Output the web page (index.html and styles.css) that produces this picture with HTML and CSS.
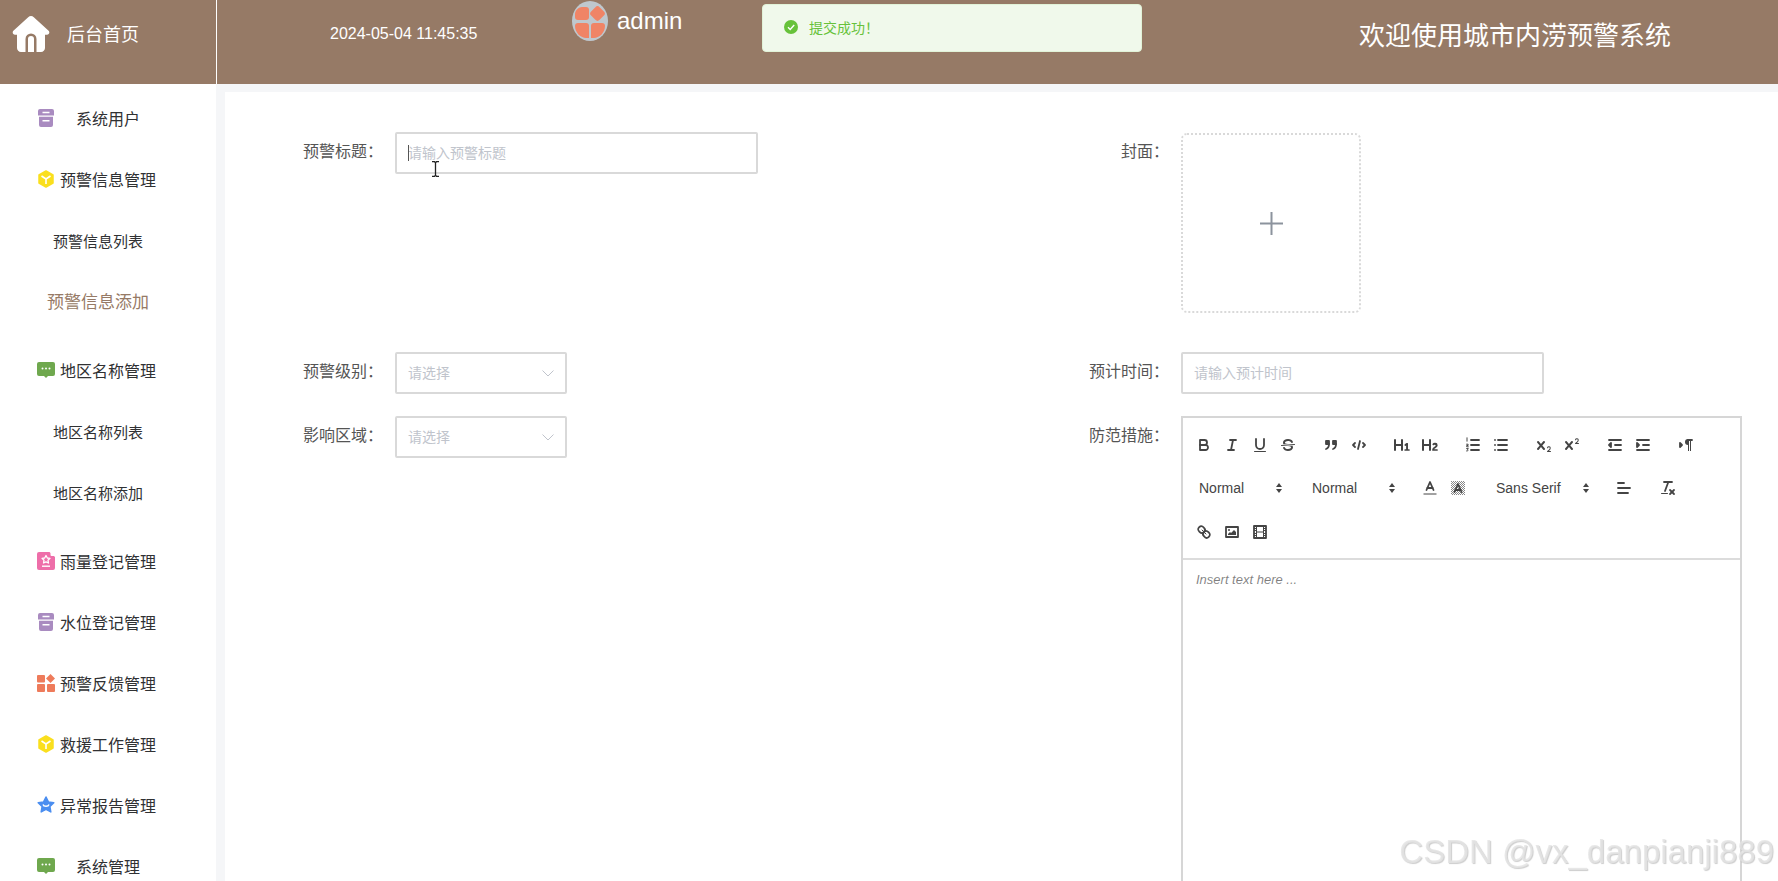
FILE: index.html
```html
<!DOCTYPE html>
<html lang="zh">
<head>
    <meta charset="UTF-8">
    <title>城市内涝预警系统</title>
    <link rel="stylesheet" href="styles.css">
</head>
<body>
    <svg class="defs" width="0" height="0">
        <symbol id="i-box" viewBox="0 0 18 18">
            <path fill="#a98bc0" d="M3 0h12a2 2 0 0 1 2 2v4.600H1V2a2 2 0 0 1 2-2zM2 7.800h14V16a2 2 0 0 1-2 2H4a2 2 0 0 1-2-2z"/>
            <path fill="#fff" d="M5.500 2.800h7v1.500h-7zM5.500 11h7v1.500h-7z"/>
        </symbol>
        <symbol id="i-cube" viewBox="0 0 18 18">
            <path fill="#fadf1e" stroke="#fadf1e" stroke-width="1.500" stroke-linejoin="round" d="M9 1l7 4v8l-7 4-7-4V5z"/>
            <path fill="none" stroke="#fff" stroke-width="1.600" d="M4.500 6L9 9l4.500-3M9 9v5"/>
        </symbol>
        <symbol id="i-chat" viewBox="0 0 18 16">
            <path fill="#6fa84e" d="M2 0h14a2 2 0 0 1 2 2v10a2 2 0 0 1-2 2h-5l-2 2-2-2H2a2 2 0 0 1-2-2V2a2 2 0 0 1 2-2z"/>
            <circle cx="5.500" cy="6.500" r="1" fill="#fff"/>
            <circle cx="9" cy="6.500" r="1" fill="#fff"/>
            <circle cx="12.500" cy="6.500" r="1" fill="#fff"/>
        </symbol>
    </svg>

    <header class="top">
        <div class="top-home">
            <svg class="home-icon" viewBox="0 0 38 36">
                <path fill="#fff" d="M19 0c1 0 2 .4 2.800 1.200l14.800 13.600c1.500 1.500.5 4-1.600 4H33v13.200c0 2.200-1.800 4-4 4H9c-2.200 0-4-1.800-4-4V18.800H3c-2.100 0-3.100-2.500-1.600-4L16.200 1.200C17 .4 18 0 19 0z"/>
                <path fill="#967a66" d="M13.500 36V23a5.500 5.500 0 0 1 11 0v13h-2.500V23a3 3 0 0 0-6 0v13z"/>
            </svg>
            <span class="home-text">后台首页</span>
        </div>
        <div class="time">2024-05-04 11:45:35</div>
        <div class="user">
            <svg class="avatar" viewBox="0 0 36 40">
                <ellipse cx="18" cy="20" rx="18" ry="20" fill="#bfc8ce"/>
                <path fill="#f08466" d="M10 6h4a3 3 0 0 1 3 3v7a3 3 0 0 1-3 3H6a3 3 0 0 1-3-3v-3c0-3 3-7 7-7z"/>
                <rect x="19.500" y="6.500" width="12" height="12" rx="3" transform="rotate(45 25.500 12.500)" fill="#f08466"/>
                <path fill="#f08466" d="M6 22h8a3 3 0 0 1 3 3v12h-3c-5 0-11-5-11-12a3 3 0 0 1 3-3z"/>
                <path fill="#f08466" d="M22 22h8a3 3 0 0 1 3 3c0 7-6 12-11 12h-3V25a3 3 0 0 1 3-3z"/>
            </svg>
            <span class="user-name">admin</span>
        </div>
        <h1 class="title">欢迎使用城市内涝预警系统</h1>
    </header>

    <div class="toast">
        <svg class="toast-icon" viewBox="0 0 14 14">
            <circle cx="7" cy="7" r="7" fill="#67c23a"/>
            <path fill="none" stroke="#fff" stroke-width="1.400" d="M4 7.200l2.200 2.200L10.200 5"/>
        </svg>
        <span>提交成功！</span>
    </div>

    <div class="main">
        <aside class="side">
            <ul class="menu">
                <li class="menu-item"><svg class="menu-icon"><use href="#i-box"/></svg><span class="menu-text wide">系统用户</span></li>
                <li class="menu-item"><svg class="menu-icon"><use href="#i-cube"/></svg><span class="menu-text">预警信息管理</span></li>
                <li class="sub">
                    <div class="sub-item">预警信息列表</div>
                    <div class="sub-item active">预警信息添加</div>
                </li>
                <li class="menu-item"><svg class="menu-icon"><use href="#i-chat"/></svg><span class="menu-text">地区名称管理</span></li>
                <li class="sub">
                    <div class="sub-item">地区名称列表</div>
                    <div class="sub-item">地区名称添加</div>
                </li>
                <li class="menu-item">
                    <svg class="menu-icon" viewBox="0 0 18 18">
                        <path fill="#ee6ea9" d="M2 0h10.500L18 5v11a2 2 0 0 1-2 2H2a2 2 0 0 1-2-2V2a2 2 0 0 1 2-2z"/>
                        <path fill="#fff" d="M13.500 0L18 4h-3.500a1 1 0 0 1-1-1z"/>
                        <path fill="none" stroke="#fff" stroke-width="1.300" stroke-linejoin="round" d="M9 3.500l1.300 2.500 2.700.4-2 1.900.5 2.700L9 9.800l-2.500 1.200.5-2.700-2-1.900 2.700-.4z"/>
                        <path fill="#fff" d="M5 13.500h8v1.400H5z"/>
                    </svg>
                    <span class="menu-text">雨量登记管理</span>
                </li>
                <li class="menu-item"><svg class="menu-icon"><use href="#i-box"/></svg><span class="menu-text">水位登记管理</span></li>
                <li class="menu-item">
                    <svg class="menu-icon" viewBox="0 0 18 18">
                        <rect x="0" y="1" width="8" height="7.500" rx="1" fill="#ee7b5b"/>
                        <path fill="#ee7b5b" d="M13.500 0l4.500 4.500-4.500 4.500L9 4.500z"/>
                        <rect x="0" y="10" width="8" height="8" rx="1" fill="#ee7b5b"/>
                        <rect x="10" y="10" width="8" height="8" rx="1" fill="#ee7b5b"/>
                    </svg>
                    <span class="menu-text">预警反馈管理</span>
                </li>
                <li class="menu-item"><svg class="menu-icon"><use href="#i-cube"/></svg><span class="menu-text">救援工作管理</span></li>
                <li class="menu-item">
                    <svg class="menu-icon" viewBox="0 0 18 18">
                        <path fill="#4b8ef0" stroke="#4b8ef0" stroke-width="1.500" stroke-linejoin="round" d="M9 1l2.400 4.900 5.400.8-3.900 3.800.9 5.400L9 13.400l-4.800 2.500.9-5.400L1.200 6.700l5.400-.8z"/>
                        <path fill="none" stroke="#fff" stroke-width="1.400" d="M6 8.500c.6 2.400 5.400 2.400 6 0"/>
                    </svg>
                    <span class="menu-text">异常报告管理</span>
                </li>
                <li class="menu-item"><svg class="menu-icon"><use href="#i-chat"/></svg><span class="menu-text wide">系统管理</span></li>
            </ul>
        </aside>

        <main class="content">
            <form class="form">
                <div class="form-item">
                    <label class="form-label">预警标题：</label>
                    <div class="input long focused"><span class="caret"></span>请输入预警标题</div>
                </div>
                <div class="form-item cover-row">
                    <label class="form-label">封面：</label>
                    <div class="upload">
                        <svg class="plus" viewBox="0 0 23 23"><path fill="none" stroke="#8c939d" stroke-width="2" d="M0 11.500h23M11.500 0v23"/></svg>
                    </div>
                </div>

                <div class="form-item">
                    <label class="form-label">预警级别：</label>
                    <div class="input short">请选择
                        <svg class="chevron" viewBox="0 0 12 7"><path fill="none" stroke="#c0c4cc" stroke-width="1" d="M.5.500L6 6l5.500-5.500"/></svg>
                    </div>
                </div>
                <div class="form-item">
                    <label class="form-label">预计时间：</label>
                    <div class="input long">请输入预计时间</div>
                </div>

                <div class="form-item">
                    <label class="form-label">影响区域：</label>
                    <div class="input short">请选择
                        <svg class="chevron" viewBox="0 0 12 7"><path fill="none" stroke="#c0c4cc" stroke-width="1" d="M.5.500L6 6l5.500-5.500"/></svg>
                    </div>
                </div>
                <div class="form-item">
                    <label class="form-label">防范措施：</label>
                    <div class="editor">
                        <div class="toolbar">
                            <div class="tool-row">
                                <div class="tool-group">
                                    <button class="tool" type="button"><svg viewBox="0 0 18 18"><path class="st" d="M5,4H9.500A2.500,2.500,0,0,1,12,6.500v0A2.500,2.500,0,0,1,9.500,9H5V4Z"/><path class="st" d="M5,9h5.500A2.500,2.500,0,0,1,13,11.500v0A2.500,2.500,0,0,1,10.500,14H5V9Z"/></svg></button>
                                    <button class="tool" type="button"><svg viewBox="0 0 18 18"><line class="st" x1="7" x2="13" y1="4" y2="4"/><line class="st" x1="5" x2="11" y1="14" y2="14"/><line class="st" x1="8" x2="10" y1="14" y2="4"/></svg></button>
                                    <button class="tool" type="button"><svg viewBox="0 0 18 18"><path class="st" d="M5,3V9a4.012,4.012,0,0,0,4,4H9a4.012,4.012,0,0,0,4-4V3"/><rect class="fl" height="1" rx=".5" ry=".5" width="12" x="3" y="15"/></svg></button>
                                    <button class="tool" type="button"><svg viewBox="0 0 18 18"><line class="st thin" x1="15.500" x2="2.500" y1="8.500" y2="9.500"/><path class="fl" d="M9.007,8C6.542,7.791,6,7.519,6,6.500,6,5.792,7.283,5,9,5c1.571,0,2.765.679,2.969,1.309a1,1,0,0,0,1.900-.617C13.356,4.106,11.354,3,9,3,6.200,3,4,4.538,4,6.500a3.200,3.200,0,0,0,.5,1.843Z"/><path class="fl" d="M8.984,10C11.457,10.208,12,10.479,12,11.500c0,.708-1.283,1.500-3,1.500-1.571,0-2.765-.679-2.969-1.309a1,1,0,1,0-1.900.617C4.644,13.894,6.646,15,9,15c2.800,0,5-1.538,5-3.500a3.200,3.200,0,0,0-.5-1.843Z"/></svg></button>
                                </div>
                                <div class="tool-group">
                                    <button class="tool" type="button"><svg viewBox="0 0 18 18"><rect class="fl st" height="3" width="3" x="4" y="5"/><rect class="fl st" height="3" width="3" x="11" y="5"/><path class="st" d="M7,8c0,4.031-3,5-3,5"/><path class="st" d="M14,8c0,4.031-3,5-3,5"/></svg></button>
                                    <button class="tool" type="button"><svg viewBox="0 0 18 18"><polyline class="st" points="5 7 3 9 5 11"/><polyline class="st" points="13 7 15 9 13 11"/><line class="st" x1="10" x2="8" y1="5" y2="13"/></svg></button>
                                </div>
                                <div class="tool-group">
                                    <button class="tool" type="button"><svg viewBox="0 0 18 18"><path class="fl" d="M10,4V14a1,1,0,0,1-2,0V10H3v4a1,1,0,0,1-2,0V4A1,1,0,0,1,3,4V8H8V4a1,1,0,0,1,2,0Zm6.068,9.209H14.990V7.599a.541.541,0,0,0-.605-.605h-.627a1.011,1.011,0,0,0-.748.297L11.645,8.566a.544.544,0,0,0-.022.858l.286.308a.539.539,0,0,0,.847.033l.099-.088a1.214,1.214,0,0,0,.242-.353h.022s-.011.309-.011.605V13.209H12.041a.541.541,0,0,0-.605.605v.44a.541.541,0,0,0,.605.605h4.027a.541.541,0,0,0,.605-.605v-.44A.541.541,0,0,0,16.068,13.209Z"/></svg></button>
                                    <button class="tool" type="button"><svg viewBox="0 0 18 18"><path class="fl" d="M16.740,13.814v.44a.541.541,0,0,1-.605.605H11.855a.584.584,0,0,1-.649-.605V14.013c0-2.905,3.399-3.422,3.399-4.555a.777.777,0,0,0-.847-.781,1.177,1.177,0,0,0-.836.385c-.275.264-.561.374-.858.132l-.429-.341c-.308-.242-.385-.518-.154-.814a2.972,2.972,0,0,1,2.454-1.177,2.454,2.454,0,0,1,2.684,2.409c0,2.453-3.179,2.927-3.278,3.938h2.794A.541.541,0,0,1,16.740,13.814ZM9,3A1,1,0,0,0,8,4V8H3V4A1,1,0,0,0,1,4V14a1,1,0,0,0,2,0V10H8v4a1,1,0,0,0,2,0V4A1,1,0,0,0,9,3Z"/></svg></button>
                                </div>
                                <div class="tool-group">
                                    <button class="tool" type="button"><svg viewBox="0 0 18 18"><line class="st" x1="7" x2="15" y1="4" y2="4"/><line class="st" x1="7" x2="15" y1="9" y2="9"/><line class="st" x1="7" x2="15" y1="14" y2="14"/><path class="st thin" d="M3 1.800v3.400M2.600 8.200h1.500v1.300H2.700v1.300h1.600M2.600 12.600h1.700l-.8 1.200c.8 0 .9 1.500-.9 1.200"/></svg></button>
                                    <button class="tool" type="button"><svg viewBox="0 0 18 18"><line class="st" x1="6" x2="15" y1="4" y2="4"/><line class="st" x1="6" x2="15" y1="9" y2="9"/><line class="st" x1="6" x2="15" y1="14" y2="14"/><line class="st" x1="3" x2="3" y1="4" y2="4"/><line class="st" x1="3" x2="3" y1="9" y2="9"/><line class="st" x1="3" x2="3" y1="14" y2="14"/></svg></button>
                                </div>
                                <div class="tool-group">
                                    <button class="tool" type="button"><svg viewBox="0 0 18 18"><path class="fl" d="M15.500,15H13.861a3.858,3.858,0,0,0,1.914-2.975,1.800,1.800,0,0,0-1.600-1.751A1.921,1.921,0,0,0,12.021,11.700a.5,.5,0,1,0,.957.291.914,.914,0,0,1,1.053-.725.81,.81,0,0,1,.744.762c0,1.076-1.170,1.870-1.940,2.431A1.456,1.456,0,0,0,12,15.500a.5,.5,0,0,0,.5.5h3A.5,.5,0,0,0,15.500,15Z"/><path class="fl" d="M9.650,5.241a1,1,0,0,0-1.409.108L6,7.964,3.759,5.349A1,1,0,0,0,2.241,6.649L4.684,9.500,2.241,12.350A1,1,0,0,0,3.759,13.650L6,11.036,8.241,13.650a1,1,0,1,0,1.518-1.300L7.316,9.500,9.759,6.651A1,1,0,0,0,9.650,5.241Z"/></svg></button>
                                    <button class="tool" type="button"><svg viewBox="0 0 18 18"><path class="fl" d="M15.500,7H13.861a4.015,4.015,0,0,0,1.914-2.975,1.800,1.800,0,0,0-1.600-1.751A1.922,1.922,0,0,0,12.021,3.700a.5,.5,0,1,0,.957.291.917,.917,0,0,1,1.053-.725.81,.81,0,0,1,.744.762c0,1.077-1.164,1.925-1.934,2.486A1.423,1.423,0,0,0,12,7.500a.5,.5,0,0,0,.5.5h3A.5,.5,0,0,0,15.500,7Z"/><path class="fl" d="M9.650,5.241a1,1,0,0,0-1.409.108L6,7.964,3.759,5.349A1,1,0,0,0,2.241,6.649L4.684,9.500,2.241,12.350A1,1,0,0,0,3.759,13.650L6,11.036,8.241,13.650a1,1,0,1,0,1.518-1.300L7.316,9.500,9.759,6.651A1,1,0,0,0,9.650,5.241Z"/></svg></button>
                                </div>
                                <div class="tool-group">
                                    <button class="tool" type="button"><svg viewBox="0 0 18 18"><line class="st" x1="3" x2="15" y1="14" y2="14"/><line class="st" x1="3" x2="15" y1="4" y2="4"/><line class="st" x1="9" x2="15" y1="9" y2="9"/><polyline class="st fl" points="5 7 5 11 3 9 5 7"/></svg></button>
                                    <button class="tool" type="button"><svg viewBox="0 0 18 18"><line class="st" x1="3" x2="15" y1="14" y2="14"/><line class="st" x1="3" x2="15" y1="4" y2="4"/><line class="st" x1="9" x2="15" y1="9" y2="9"/><polyline class="st fl" points="3 7 3 11 5 9 3 7"/></svg></button>
                                </div>
                                <div class="tool-group">
                                    <button class="tool" type="button"><svg viewBox="0 0 18 18"><polygon class="st fl" points="3 11 5 9 3 7 3 11"/><line class="st" x1="15" x2="11" y1="4" y2="4"/><path class="fl" d="M11,3a3,3,0,0,0,0,6h1V3H11Z"/><rect class="fl" height="11" width="1" x="11" y="4"/><rect class="fl" height="11" width="1" x="13" y="4"/></svg></button>
                                </div>
                            </div>
                            <div class="tool-row">
                                <div class="picker">Normal<svg class="updown" viewBox="0 0 18 18"><polygon class="fl" points="6 8 9 4 12 8"/><polygon class="fl" points="6 10 9 14 12 10"/></svg></div>
                                <div class="picker">Normal<svg class="updown" viewBox="0 0 18 18"><polygon class="fl" points="6 8 9 4 12 8"/><polygon class="fl" points="6 10 9 14 12 10"/></svg></div>
                                <div class="tool-group color-group">
                                    <button class="tool" type="button"><svg viewBox="0 0 18 18"><line class="st thin label-line" x1="3" x2="15" y1="15" y2="15"/><polyline class="st" points="5.500 11 9 3 12.500 11"/><line class="st" x1="11.630" x2="6.380" y1="9" y2="9"/></svg></button>
                                    <button class="tool" type="button"><svg viewBox="0 0 18 18"><defs><pattern id="hatch" width="2" height="2" patternUnits="userSpaceOnUse"><rect width="1" height="1" fill="#888"/><rect x="1" y="1" width="1" height="1" fill="#888"/></pattern></defs><rect x="2" y="2" width="14" height="14" fill="url(#hatch)"/><polyline class="st" points="5.500 13 9 5 12.500 13"/><line class="st" x1="11.630" x2="6.380" y1="11" y2="11"/></svg></button>
                                </div>
                                <div class="picker font-picker">Sans Serif<svg class="updown" viewBox="0 0 18 18"><polygon class="fl" points="6 8 9 4 12 8"/><polygon class="fl" points="6 10 9 14 12 10"/></svg></div>
                                <div class="tool-group align-group">
                                    <button class="tool" type="button"><svg viewBox="0 0 18 18"><line class="st" x1="3" x2="15" y1="9" y2="9"/><line class="st" x1="3" x2="13" y1="14" y2="14"/><line class="st" x1="3" x2="9" y1="4" y2="4"/></svg></button>
                                </div>
                                <div class="tool-group">
                                    <button class="tool" type="button"><svg viewBox="0 0 18 18"><line class="st" x1="5" x2="13" y1="3" y2="3"/><line class="st" x1="6" x2="9.350" y1="12" y2="3"/><line class="st" x1="11" x2="15" y1="11" y2="15"/><line class="st" x1="15" x2="11" y1="11" y2="15"/><rect class="fl" height="1" rx=".5" ry=".5" width="7" x="2" y="14"/></svg></button>
                                </div>
                            </div>
                            <div class="tool-row">
                                <div class="tool-group">
                                    <button class="tool" type="button"><svg viewBox="0 0 18 18"><line class="st thin" x1="7" x2="11" y1="7" y2="11"/><path class="st" d="M8.900,4.577a3.476,3.476,0,0,1,.36,4.679A3.476,3.476,0,0,1,4.577,8.900C3.185,7.500,2.035,6.400,4.217,4.217S7.500,3.185,8.900,4.577Z"/><path class="st" d="M13.423,9.100a3.476,3.476,0,0,0-4.679-.36,3.476,3.476,0,0,0,.36,4.679c1.392,1.392,2.500,2.542,4.679.36S14.815,10.500,13.423,9.100Z"/></svg></button>
                                    <button class="tool" type="button"><svg viewBox="0 0 18 18"><rect class="st" height="10" width="12" x="3" y="4"/><circle class="fl" cx="6" cy="7" r="1"/><polyline class="fl" points="5 12 5 11 7 9 8 10 11 7 13 9 13 12 5 12"/></svg></button>
                                    <button class="tool" type="button"><svg viewBox="0 0 18 18"><rect class="st" height="12" width="12" x="3" y="3"/><rect class="fl" height="12" width="1" x="5" y="3"/><rect class="fl" height="12" width="1" x="12" y="3"/><rect class="fl" height="1" width="8" x="5" y="8.500"/><rect class="fl" height="1" width="3" x="3" y="5"/><rect class="fl" height="1" width="3" x="3" y="7"/><rect class="fl" height="1" width="3" x="3" y="10"/><rect class="fl" height="1" width="3" x="3" y="12"/><rect class="fl" height="1" width="3" x="12" y="5"/><rect class="fl" height="1" width="3" x="12" y="7"/><rect class="fl" height="1" width="3" x="12" y="10"/><rect class="fl" height="1" width="3" x="12" y="12"/></svg></button>
                                </div>
                            </div>
                        </div>
                        <div class="editor-body">Insert text here ...</div>
                    </div>
                </div>
            </form>
        </main>
    </div>

    <svg class="mouse" viewBox="0 0 9 16"><path fill="none" stroke="#222" stroke-width="1.300" d="M1 .7h2.500l1 1 1-1H8M4.500 1.700v12.600M1 15.300h2.500l1-1 1 1H8"/></svg>
    <div class="watermark">CSDN @vx_danpianji889</div>
</body>
</html>
```

FILE: styles.css
```css
* {
    box-sizing: border-box;
}
html, body {
    height: 100%;
}
body {
    margin: 0;
    overflow: hidden;
    background: #f5f6f8;
    font-family: "Liberation Sans", "Noto Sans CJK SC", sans-serif;
}
.defs {
    position: absolute;
}

/* header */
.top {
    display: flex;
    align-items: center;
    height: 84px;
    background: #967a66;
    color: #fff;
}
.top-home {
    display: flex;
    align-items: center;
    width: 217px;
    height: 100%;
    padding: 0 0 16px 12px;
    border-right: 1px solid #fff;
}
.home-icon {
    width: 38px;
    height: 36px;
}
.home-text {
    margin: 0 0 2px 17px;
    font-size: 18px;
}
.time {
    width: 355px;
    padding: 0 0 16px 113px;
    font-size: 16px;
}
.user {
    display: flex;
    align-self: flex-start;
    padding-top: 1px;
}
.avatar {
    width: 36px;
    height: 40px;
}
.user-name {
    margin-left: 9px;
    font-size: 24px;
    line-height: 40px;
}
.title {
    margin: 0 107px 0 auto;
    padding-bottom: 18px;
    font-size: 26px;
    font-weight: normal;
}

.toast {
    position: fixed;
    top: 4px;
    left: 762px;
    display: flex;
    align-items: center;
    width: 380px;
    height: 48px;
    padding: 0 0 2px 21px;
    background: #f0f9eb;
    border: 1px solid #e1f3d8;
    border-radius: 4px;
    color: #67c23a;
    font-size: 14px;
}
.toast-icon {
    width: 14px;
    height: 14px;
    margin-right: 11px;
}

/* sidebar */
.main {
    display: flex;
    height: calc(100% - 84px);
    overflow: hidden;
}
.side {
    width: 216px;
    background: #fff;
    flex-shrink: 0;
}
.menu {
    margin: 0;
    padding: 4px 0 0;
    list-style: none;
}
.menu-item {
    display: flex;
    align-items: center;
    height: 61px;
    padding: 0 0 2px 37px;
    color: #303133;
    font-size: 16px;
}
.menu-icon {
    width: 18px;
    height: 18px;
    flex-shrink: 0;
}
.menu-text {
    margin-left: 5px;
}
.menu-text.wide {
    margin-left: 21px;
}
.sub {
    margin-bottom: 8px;
}
.sub-item {
    width: 196px;
    height: 61px;
    padding-top: 2px;
    color: #303133;
    font-size: 15px;
    line-height: 59px;
    text-align: center;
}
.sub-item.active {
    color: #967a66;
    font-size: 17px;
}

/* form */
.content {
    flex: 1;
    margin: 8px 0 0 9px;
    background: #fff;
}
.form {
    display: grid;
    grid-template-columns: 786px 1fr;
    padding: 40px 0 0 50px;
}
.form-item {
    display: flex;
    align-items: flex-start;
    margin-bottom: 22px;
}
.cover-row {
    margin-bottom: 39px;
}
.form-label {
    width: 120px;
    padding-right: 12px;
    color: #555;
    font-size: 16px;
    line-height: 40px;
    text-align: right;
}
.input {
    position: relative;
    height: 42px;
    padding-left: 11px;
    background: #fff;
    border: 2px solid #d9d9d9;
    border-radius: 2px;
    color: #c0c4cc;
    font-size: 14px;
    line-height: 38px;
}
.input.long {
    width: 363px;
}
.input.short {
    width: 172px;
}
.caret {
    position: absolute;
    top: 11px;
    left: 11px;
    width: 1px;
    height: 16px;
    background: #555;
}
.chevron {
    position: absolute;
    top: 16px;
    right: 11px;
    width: 12px;
    height: 7px;
}
.upload {
    display: flex;
    align-items: center;
    justify-content: center;
    width: 180px;
    height: 180px;
    margin-top: 1px;
    border: 2px dotted #d9d9d9;
    border-radius: 6px;
}
.plus {
    width: 23px;
    height: 23px;
}

/* editor */
.editor {
    width: 561px;
    height: 480px;
    border: 2px solid #d6d6d6;
}
.toolbar {
    padding: 5px 0 4.500px 7px;
    border-bottom: 2px solid #dcdcdc;
}
.tool-row {
    display: flex;
    align-items: center;
    height: 43.500px;
}
.tool-group {
    display: flex;
    margin-right: 15px;
}
.tool {
    width: 28px;
    height: 24px;
    padding: 3px 5px;
    background: none;
    border: none;
}
.tool svg {
    display: block;
    width: 18px;
    height: 18px;
}
.st {
    fill: none;
    stroke: #444;
    stroke-width: 1.800;
    stroke-linecap: round;
    stroke-linejoin: round;
}
.st.thin {
    stroke-width: 1;
}
.label-line {
    stroke-linecap: square;
}
.fl {
    fill: #444;
}
.st.fl {
    fill: #444;
}
.picker {
    position: relative;
    width: 98px;
    height: 24px;
    margin-right: 15px;
    padding-left: 9px;
    color: #444;
    font-size: 14px;
    line-height: 24px;
}
.font-picker {
    width: 108px;
}
.updown {
    position: absolute;
    top: 3px;
    right: 0;
    width: 18px;
    height: 18px;
}
.color-group {
    margin-right: 15px;
}
.align-group {
    margin-right: 16px;
}
.editor-body {
    padding: 11px 12px 0 13px;
    color: rgba(0, 0, 0, 0.5);
    font-size: 13px;
    font-style: italic;
    line-height: 18px;
}

/* things on top of the page */
.mouse {
    position: fixed;
    top: 161px;
    left: 431px;
    width: 9px;
    height: 16px;
}
.watermark {
    position: fixed;
    right: 4px;
    bottom: 10px;
    color: rgba(228, 228, 228, 0.85);
    font-size: 33px;
    line-height: 38px;
    text-shadow: 1px 1px 1px rgba(0, 0, 0, 0.2);
    white-space: nowrap;
}
```
